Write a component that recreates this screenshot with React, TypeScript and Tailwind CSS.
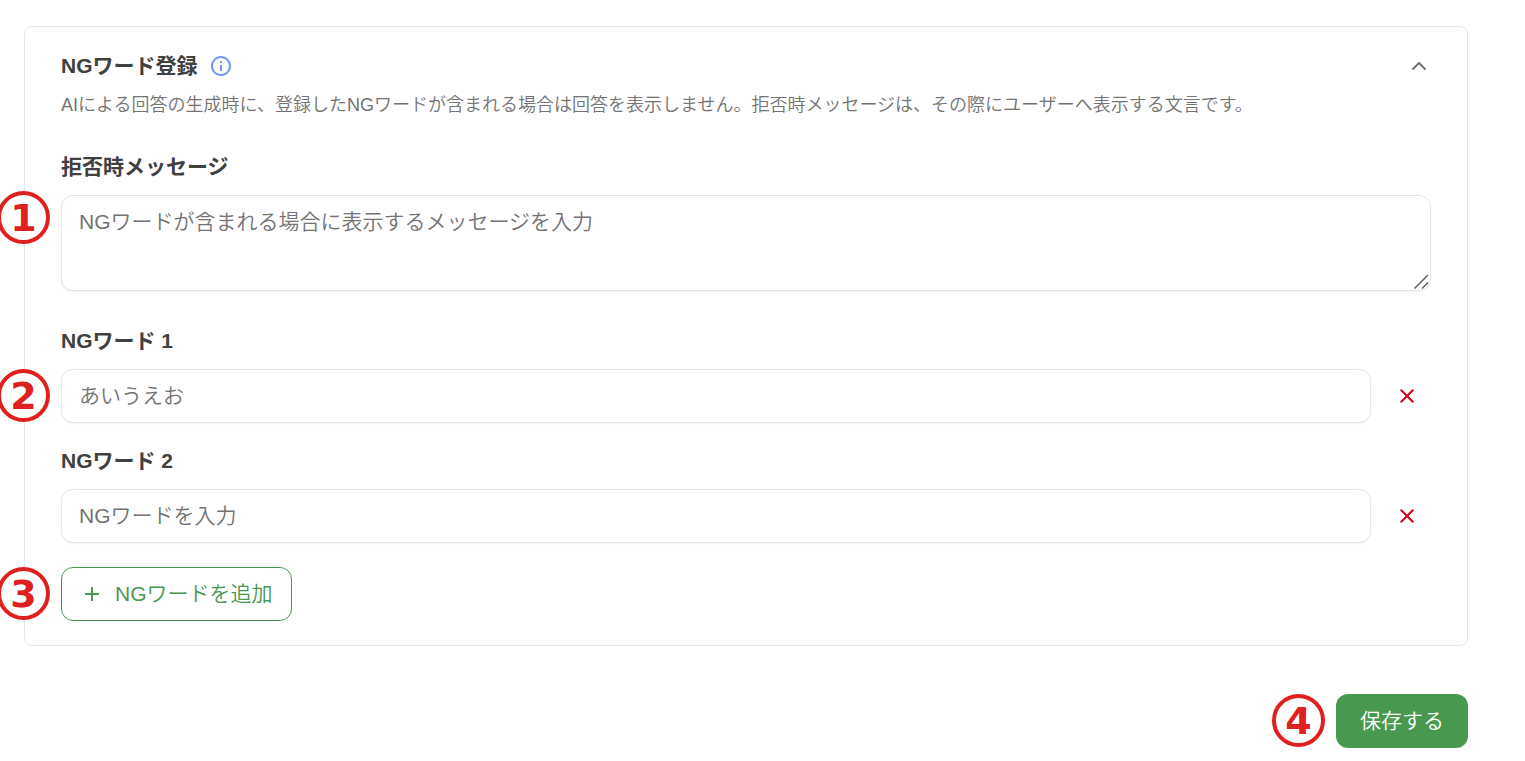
import { useState } from "react";
import type { ReactNode } from "react";

const ICON_PATHS = {
  info: "M11 7h2v2h-2zm0 4h2v6h-2zm1-9C6.48 2 2 6.48 2 12s4.48 10 10 10 10-4.48 10-10S17.52 2 12 2zm0 18c-4.41 0-8-3.59-8-8s3.59-8 8-8 8 3.59 8 8-3.59 8-8 8z",
  close: "M19 6.41 17.59 5 12 10.59 6.41 5 5 6.41 10.59 12 5 17.59 6.41 19 12 13.41 17.59 19 19 17.59 13.41 12z",
  add: "M19 13h-6v6h-2v-6H5v-2h6V5h2v6h6z",
};

function Icon({ name }: { name: keyof typeof ICON_PATHS }) {
  return (
    <svg viewBox="0 0 24 24" className="size-6 shrink-0" fill="currentColor" aria-hidden="true">
      <path d={ICON_PATHS[name]} />
    </svg>
  );
}

function Marker({ children }: { children: ReactNode }) {
  return (
    <span className="flex size-[53px] items-center justify-center rounded-full border-4 border-[#e02020] bg-white font-['DejaVu_Sans',sans-serif] text-[38px] leading-none font-bold text-[#e02020]">
      {children}
    </span>
  );
}

function SideMarker({ children }: { children: ReactNode }) {
  return (
    <div className="absolute top-0 -left-16">
      <Marker>{children}</Marker>
    </div>
  );
}

const fieldStyle =
  "block w-full rounded-xl border border-[#e5e5e5] bg-white px-[17px] text-[21px] font-[350] text-[#404040] shadow-xs outline-none placeholder:text-[#737373] placeholder:opacity-100";
const labelStyle = "block text-[21px] leading-7 font-bold";

export default function App() {
  const [open, setOpen] = useState(true);
  const [words, setWords] = useState([
    { id: 1, placeholder: "あいうえお" },
    { id: 2, placeholder: "NGワードを入力" },
  ]);

  const addWord = () =>
    setWords((list) => [
      ...list,
      { id: Math.max(0, ...list.map((w) => w.id)) + 1, placeholder: "NGワードを入力" },
    ]);

  return (
    <main className="overflow-x-hidden bg-white pt-[26px] pr-[57px] pb-3 pl-6 font-['Liberation_Sans','Noto_Sans_CJK_JP',sans-serif] text-[#404040]">
      <section className="rounded-lg border border-[#e5e5e5] px-9 py-6">
        <div className="flex items-center justify-between">
          <div className="flex items-center gap-[11px]">
            <h2 className="text-[21px] leading-[30px] font-bold">NGワード登録</h2>
            <button type="button" aria-label="ヘルプ" className="text-[#7096f8]">
              <Icon name="info" />
            </button>
          </div>
          <button type="button" aria-label="開閉" aria-expanded={open} onClick={() => setOpen(!open)} className="text-[#737373]">
            <svg viewBox="0 0 24 24" className="size-6" fill="none" stroke="currentColor" strokeWidth="2" strokeLinecap="round" strokeLinejoin="round" aria-hidden="true">
              <path d="m18 15-6-6-6 6" />
            </svg>
          </button>
        </div>
        <p className="mt-2.5 text-[18px] leading-7 font-[350] text-[#737373]">
          AIによる回答の生成時に、登録したNGワードが含まれる場合は回答を表示しません。拒否時メッセージは、その際にユーザーへ表示する文言です。
        </p>

        {open && (
          <>
            <div className="mt-[34px]">
              <label htmlFor="message" className={labelStyle}>
                拒否時メッセージ
              </label>
              <div className="relative mt-3.5">
                <textarea
                  id="message"
                  placeholder="NGワードが含まれる場合に表示するメッセージを入力"
                  className={`${fieldStyle} h-24 resize-y py-3 leading-7 [&::-webkit-resizer]:bg-transparent`}
                />
                <svg viewBox="0 0 16 16" className="pointer-events-none absolute right-0.5 bottom-0.5 size-4" fill="none" stroke="#606060" strokeWidth="1.5" aria-hidden="true">
                  <path d="M1.5 15.5 15 2M9 15.5 15 9.5" />
                </svg>
                <div className="absolute -top-1 -left-16">
                  <Marker>1</Marker>
                </div>
              </div>
            </div>

            <div className="mt-9 flex flex-col gap-6">
              {words.map((word, i) => (
                <div key={word.id}>
                  <label htmlFor={`word-${word.id}`} className={labelStyle}>
                    NGワード {i + 1}
                  </label>
                  <div className="relative mt-3.5 flex items-center gap-3">
                    <input
                      id={`word-${word.id}`}
                      type="text"
                      placeholder={word.placeholder}
                      className={`${fieldStyle} h-[54px] min-w-0 flex-1`}
                    />
                    <button
                      type="button"
                      aria-label="削除"
                      onClick={() => setWords((list) => list.filter((w) => w.id !== word.id))}
                      className="flex size-12 items-center justify-center text-[#d9001b]"
                    >
                      <Icon name="close" />
                    </button>
                    {i === 0 && <SideMarker>2</SideMarker>}
                  </div>
                </div>
              ))}
              <div className="relative flex">
                <button
                  type="button"
                  onClick={addWord}
                  className="flex h-[54px] items-center gap-[11px] rounded-xl border border-[#48994f] px-[18px] text-[21px] font-[350] text-[#48994f]"
                >
                  <Icon name="add" />
                  NGワードを追加
                </button>
                <SideMarker>3</SideMarker>
              </div>
            </div>
          </>
        )}
      </section>

      <div className="mt-12 flex items-start justify-end gap-[11px]">
        <Marker>4</Marker>
        <button type="button" className="h-[54px] rounded-xl bg-[#48994f] px-6 text-[21px] font-[350] text-white">
          保存する
        </button>
      </div>
    </main>
  );
}
